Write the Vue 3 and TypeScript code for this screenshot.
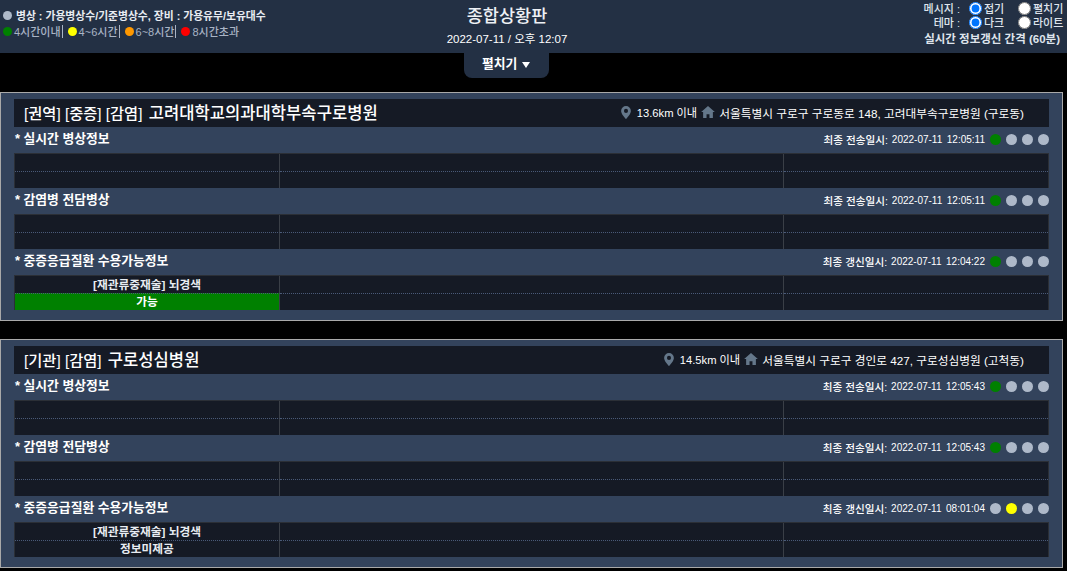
<template>
  <div class="page">
    <header class="top-bar">
      <div class="legend">
        <div class="legend-line bright">
          <span class="dot gray"></span>
          <span>병상 : 가용병상수/기준병상수, 장비 : 가용유무/보유대수</span>
        </div>
        <div class="legend-line">
          <span v-for="(item, i) in legend" :key="item.label" class="legend-item" :class="{ last: i === legend.length - 1 }">
            <span class="dot" :class="item.color"></span>{{ item.label }}
          </span>
        </div>
      </div>

      <div class="title-box">
        <h1>종합상황판</h1>
        <p>2022-07-11 / 오후 12:07</p>
      </div>

      <div class="options">
        <div class="option-row">
          <span class="option-label">메시지 :</span>
          <label class="radio"><input type="radio" name="msg" checked />접기</label>
          <label class="radio"><input type="radio" name="msg" />펼치기</label>
        </div>
        <div class="option-row">
          <span class="option-label">테마 :</span>
          <label class="radio"><input type="radio" name="theme" checked />다크</label>
          <label class="radio"><input type="radio" name="theme" />라이트</label>
        </div>
        <div class="interval">실시간 정보갱신 간격 (60분)</div>
      </div>
    </header>

    <div class="toggle-wrap">
      <button class="toggle-btn">펼치기 <span class="caret"></span></button>
    </div>

    <section v-for="h in hospitals" :key="h.name" class="card">
      <div class="card-title">
        <div class="name">{{ h.tags }} <span class="name-main">{{ h.name }}</span></div>
        <div class="addr">
          <svg class="pin" viewBox="0 0 12 16" width="10" height="13">
            <path fill-rule="evenodd" d="M6 0a6 6 0 0 0-6 6c0 3.6 4.200 8 6 10 1.800-2 6-6.400 6-10a6 6 0 0 0-6-6zm0 3.500a2.500 2.500 0 1 1 0 5 2.500 2.500 0 0 1 0-5z" />
          </svg>
          <span class="dist">{{ h.dist }}</span>
          <svg class="home" viewBox="0 0 16 14" width="14" height="12">
            <path d="M8 0 0 7h2.300v7h4V9.500h3.400V14h4V7H16z" />
          </svg>
          <span>{{ h.addr }}</span>
        </div>
      </div>

      <template v-for="s in h.sections" :key="s.title">
        <div class="section-head">
          <span class="section-title">* {{ s.title }}</span>
          <span class="section-meta">
            <span class="stamp-label">{{ s.stampLabel }}:</span>
            <span class="stamp">{{ s.stamp }}</span>
            <span v-for="(c, i) in s.dots" :key="i" class="dot big" :class="c"></span>
          </span>
        </div>
        <div class="grid-table">
          <div class="cell" :class="{ strong: s.top }">{{ s.top }}</div>
          <div class="cell"></div>
          <div class="cell"></div>
          <div class="cell lower strong" :class="{ ok: s.bottom === '가능' }">{{ s.bottom }}</div>
          <div class="cell lower"></div>
          <div class="cell lower"></div>
        </div>
      </template>
    </section>
  </div>
</template>

<script setup lang="ts">
interface Section {
  title: string;
  stampLabel: string;
  stamp: string;
  dots: string[];
  top?: string;
  bottom?: string;
}

const legend = [
  { label: '4시간이내', color: 'green' },
  { label: '4~6시간', color: 'yellow' },
  { label: '6~8시간', color: 'orange' },
  { label: '8시간초과', color: 'red' }
];

const greenDots = ['green', 'gray', 'gray', 'gray'];

const hospitals: { tags: string; name: string; dist: string; addr: string; sections: Section[] }[] = [
  {
    tags: '[권역] [중증] [감염]',
    name: '고려대학교의과대학부속구로병원',
    dist: '13.6km 이내',
    addr: '서울특별시 구로구 구로동로 148, 고려대부속구로병원 (구로동)',
    sections: [
      { title: '실시간 병상정보', stampLabel: '최종 전송일시', stamp: '2022-07-11  12:05:11', dots: greenDots },
      { title: '감염병 전담병상', stampLabel: '최종 전송일시', stamp: '2022-07-11  12:05:11', dots: greenDots },
      { title: '중증응급질환 수용가능정보', stampLabel: '최종 갱신일시', stamp: '2022-07-11  12:04:22', dots: greenDots, top: '[재관류중재술] 뇌경색', bottom: '가능' }
    ]
  },
  {
    tags: '[기관] [감염]',
    name: '구로성심병원',
    dist: '14.5km 이내',
    addr: '서울특별시 구로구 경인로 427, 구로성심병원 (고척동)',
    sections: [
      { title: '실시간 병상정보', stampLabel: '최종 전송일시', stamp: '2022-07-11  12:05:43', dots: greenDots },
      { title: '감염병 전담병상', stampLabel: '최종 전송일시', stamp: '2022-07-11  12:05:43', dots: greenDots },
      { title: '중증응급질환 수용가능정보', stampLabel: '최종 갱신일시', stamp: '2022-07-11  08:01:04', dots: ['gray', 'yellow', 'gray', 'gray'], top: '[재관류중재술] 뇌경색', bottom: '정보미제공' }
    ]
  }
];
</script>

<style>
html,
body {
  margin: 0;
  background: #000;
  overflow: hidden;
}
</style>

<style scoped>
.page {
  height: 571px;
  overflow: hidden;
  background: #000;
  color: #fff;
  font-family: "Liberation Sans", "Noto Sans CJK KR", sans-serif;
  font-size: 12px;
}

.top-bar {
  height: 53px;
  box-sizing: border-box;
  background: #233044;
  display: grid;
  grid-template-columns: 364px 280px 1fr;
  padding: 0 0 0 3px;
}

.legend {
  padding-top: 7px;
  font-size: 11px;
  font-weight: 500;
}

.legend-line {
  display: flex;
  align-items: center;
  height: 16px;
  color: #a9b4c5;
}

.legend-line.bright {
  color: #e8ecf2;
  font-size: 10.800px;
  font-weight: 700;
  gap: 4px;
}

.legend-item {
  display: flex;
  align-items: center;
  gap: 2px;
  padding-right: 1px;
  margin-right: 5px;
  border-right: 1px solid #a9b4c5;
  height: 13px;
}

.legend-item.last {
  border-right: none;
}

.dot {
  display: inline-block;
  width: 9px;
  height: 9px;
  border-radius: 50%;
  flex: none;
}

.dot.big {
  width: 11px;
  height: 11px;
  margin-left: 5px;
}

.dot.gray {
  background: #aeb9c9;
}

.dot.green {
  background: #008000;
}

.dot.yellow {
  background: #ffff00;
}

.dot.orange {
  background: #ff9800;
}

.dot.red {
  background: #ff0000;
}

.title-box {
  text-align: center;
  padding-top: 5px;
}

.title-box h1 {
  margin: 0;
  font-size: 17.500px;
  font-weight: 500;
  line-height: 23px;
  color: #eef1f5;
}

.title-box p {
  margin: 3px 0 0;
  font-size: 11.500px;
  line-height: 16px;
}

.options {
  display: flex;
  flex-direction: column;
  align-items: flex-end;
  font-size: 11px;
  font-weight: 500;
  color: #dfe4ec;
  padding-top: 1px;
}

.option-row {
  display: flex;
  align-items: center;
  height: 14px;
}

.option-label {
  margin-right: 9px;
}

.radio {
  display: flex;
  align-items: center;
  width: 49px;
}

.radio input {
  width: 13px;
  height: 13px;
  margin: 0 2px 0 0;
}

.interval {
  margin-top: 3px;
  padding-right: 7px;
  line-height: 15px;
  font-size: 11.500px;
  font-weight: 700;
}

.toggle-wrap {
  height: 39px;
  display: flex;
  justify-content: center;
  align-items: flex-start;
  padding-right: 55px;
}

.toggle-btn {
  width: 85px;
  height: 25px;
  padding: 0 0 8px;
  border: none;
  border-radius: 0 0 8px 8px;
  background: #233044;
  color: #fff;
  font: 700 12.800px "Liberation Sans", "Noto Sans CJK KR", sans-serif;
}

.caret {
  display: inline-block;
  margin-left: 1px;
  border-left: 4.500px solid transparent;
  border-right: 4.500px solid transparent;
  border-top: 6px solid #fff;
  vertical-align: 0;
}

.card {
  width: 1063px;
  box-sizing: border-box;
  margin-bottom: 18px;
  padding: 6px 13px 10px;
  background: #33435c;
  border: 1px solid #a9a9a9;
}

.card-title {
  height: 28px;
  box-sizing: border-box;
  padding: 0 25px 2px 10px;
  background: #151a25;
  display: flex;
  align-items: center;
  justify-content: space-between;
}

.name {
  font-size: 15.300px;
  font-weight: 500;
}

.name-main {
  font-size: 16.600px;
  margin-left: 2px;
}

.addr {
  display: flex;
  align-items: center;
  font-size: 11.700px;
  gap: 4px;
}

.dist {
  font-size: 11.200px;
  margin-left: 2px;
}

.pin,
.home {
  fill: #64778a;
  flex: none;
}

.section-head {
  height: 26px;
  display: flex;
  align-items: center;
  justify-content: space-between;
  padding-bottom: 1px;
  box-sizing: border-box;
}

.section-title {
  font-size: 12.800px;
  font-weight: 700;
  padding-left: 1px;
  margin-top: -5px;
}

.section-meta {
  display: flex;
  align-items: center;
  font-size: 10.600px;
  font-weight: 500;
}

.stamp {
  font-size: 10px;
  margin-left: 4px;
  white-space: pre;
  word-spacing: -0.500px;
}

.grid-table {
  display: grid;
  grid-template-columns: 265px 504px 264px;
  border: 1px solid #2b2f36;
  border-bottom: none;
  box-sizing: border-box;
  width: 1035px;
  background: #151a25;
}

.cell {
  height: 17px;
  line-height: 17px;
  box-sizing: border-box;
  text-align: center;
  border-right: 1px solid #3a3f47;
}

.cell.lower {
  line-height: 16px;
  border-top: 1px dotted #4a5a78;
}

.cell:nth-child(3n) {
  border-right: none;
}

.cell.strong {
  font-size: 11.700px;
  font-weight: 700;
  color: #e8ecf2;
}

.cell.ok {
  background: #008000;
  color: #fff;
}
</style>
